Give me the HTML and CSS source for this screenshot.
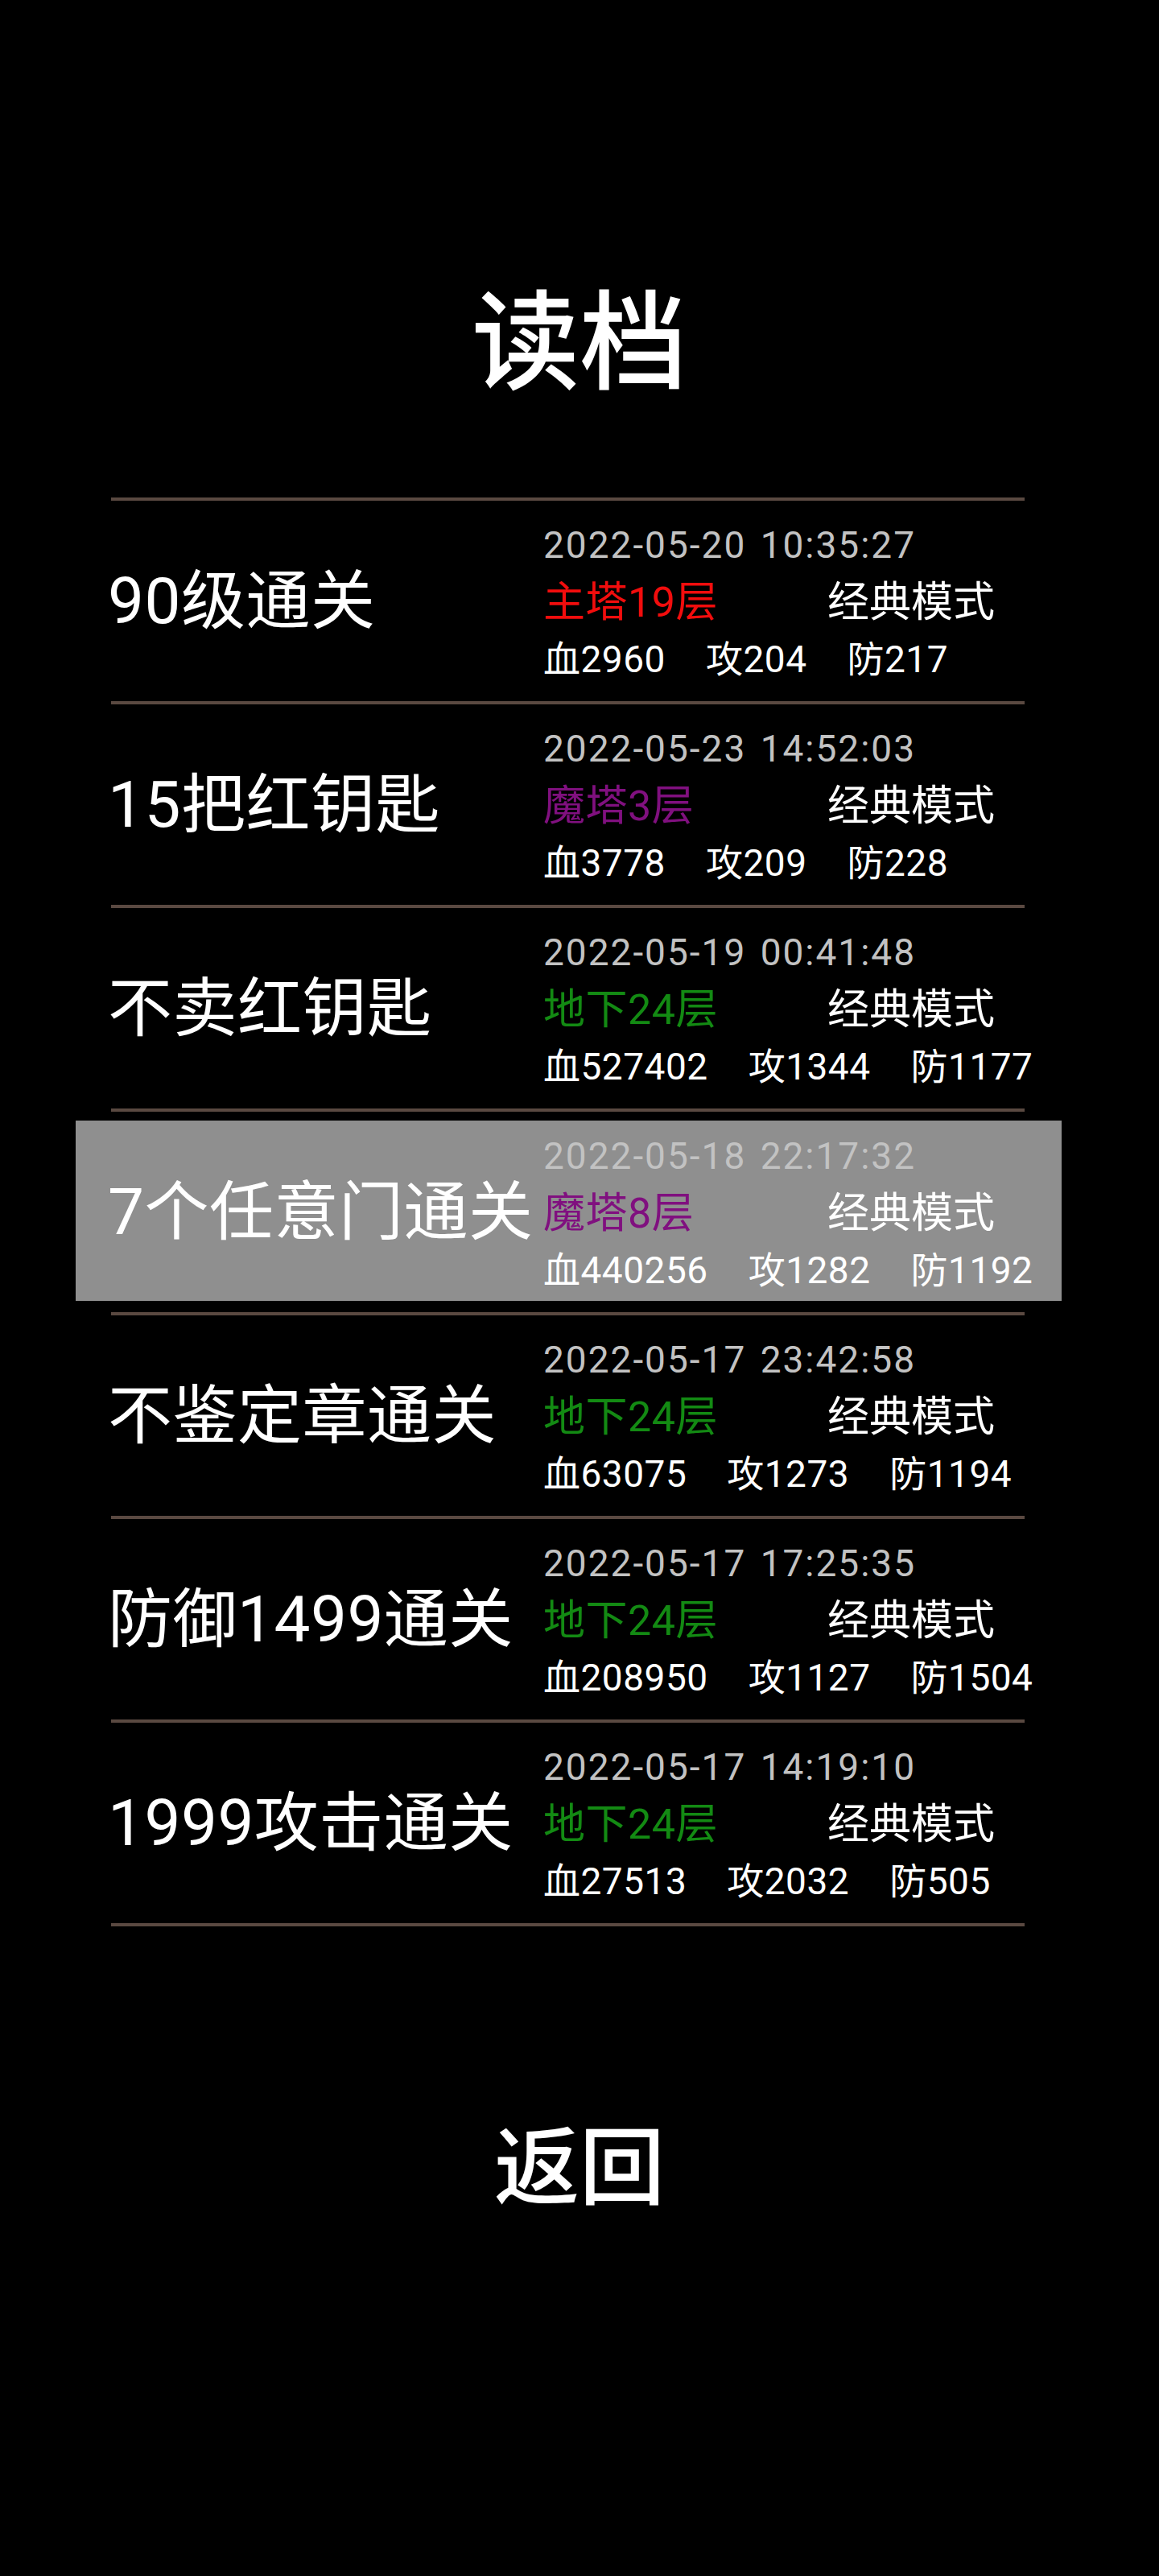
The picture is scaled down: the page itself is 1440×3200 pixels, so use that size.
FILE: index.html
```html
<!DOCTYPE html>
<html lang="zh-CN">
<head>
<meta charset="utf-8">
<title>读档</title>
<link rel="stylesheet" href="styles.css">
</head>
<body>
<main class="screen">
  <h1 class="heading">读档</h1>
  <ul class="saves">
    <li class="save">
      <div class="save-name">90级通关</div>
      <div class="save-info">
        <div class="save-time">2022-05-20 10:35:27</div>
        <div class="save-floor"><span class="floor floor-main">主塔19层</span><span class="mode">经典模式</span></div>
        <div class="save-stats"><span>血2960</span><span>攻204</span><span>防217</span></div>
      </div>
    </li>
    <li class="save">
      <div class="save-name">15把红钥匙</div>
      <div class="save-info">
        <div class="save-time">2022-05-23 14:52:03</div>
        <div class="save-floor"><span class="floor floor-magic">魔塔3层</span><span class="mode">经典模式</span></div>
        <div class="save-stats"><span>血3778</span><span>攻209</span><span>防228</span></div>
      </div>
    </li>
    <li class="save">
      <div class="save-name">不卖红钥匙</div>
      <div class="save-info">
        <div class="save-time">2022-05-19 00:41:48</div>
        <div class="save-floor"><span class="floor floor-under">地下24层</span><span class="mode">经典模式</span></div>
        <div class="save-stats"><span>血527402</span><span>攻1344</span><span>防1177</span></div>
      </div>
    </li>
    <li class="save is-selected">
      <div class="save-name">7个任意门通关</div>
      <div class="save-info">
        <div class="save-time">2022-05-18 22:17:32</div>
        <div class="save-floor"><span class="floor floor-magic">魔塔8层</span><span class="mode">经典模式</span></div>
        <div class="save-stats"><span>血440256</span><span>攻1282</span><span>防1192</span></div>
      </div>
    </li>
    <li class="save">
      <div class="save-name">不鉴定章通关</div>
      <div class="save-info">
        <div class="save-time">2022-05-17 23:42:58</div>
        <div class="save-floor"><span class="floor floor-under">地下24层</span><span class="mode">经典模式</span></div>
        <div class="save-stats"><span>血63075</span><span>攻1273</span><span>防1194</span></div>
      </div>
    </li>
    <li class="save">
      <div class="save-name">防御1499通关</div>
      <div class="save-info">
        <div class="save-time">2022-05-17 17:25:35</div>
        <div class="save-floor"><span class="floor floor-under">地下24层</span><span class="mode">经典模式</span></div>
        <div class="save-stats"><span>血208950</span><span>攻1127</span><span>防1504</span></div>
      </div>
    </li>
    <li class="save">
      <div class="save-name">1999攻击通关</div>
      <div class="save-info">
        <div class="save-time">2022-05-17 14:19:10</div>
        <div class="save-floor"><span class="floor floor-under">地下24层</span><span class="mode">经典模式</span></div>
        <div class="save-stats"><span>血27513</span><span>攻2032</span><span>防505</span></div>
      </div>
    </li>
  </ul>
  <div class="back">返回</div>
</main>
</body>
</html>
```

FILE: styles.css
```css
* {
  box-sizing: border-box;
}

html,
body {
  margin: 0;
  background: #000;
}

body {
  font-family: Roboto, "Noto Sans CJK SC", sans-serif;
  color: #fff;
}

.screen {
  padding-top: 335px;
  min-height: 3200px;
}

.heading {
  margin: 0;
  text-align: center;
  font-family: "Noto Sans CJK SC", sans-serif;
  font-weight: 500;
  font-size: 134px;
  line-height: 160px;
}

.saves {
  list-style: none;
  margin: 123px 0 0 138px;
  padding: 0;
  width: 1135px;
  border-bottom: 4px solid #5a4941;
}

.save {
  position: relative;
  z-index: 0;
  display: grid;
  grid-template-columns: 537px 1fr;
  height: 253px;
  border-top: 4px solid #5a4941;
}

.save.is-selected::before {
  content: "";
  position: absolute;
  top: 11px;
  bottom: 14px;
  left: -44px;
  right: -46px;
  background: #8f8f8f;
  z-index: -1;
}

.save-name {
  align-self: center;
  margin-left: -4px;
  font-size: 80px;
  line-height: 80px;
  letter-spacing: 0.5px;
  white-space: nowrap;
}

.save-info {
  padding-top: 20px;
}

.save-time,
.save-floor,
.save-stats {
  height: 71px;
  line-height: 71px;
  white-space: nowrap;
}

.save-time {
  font-size: 46px;
  color: #c2c2c2;
  letter-spacing: 2px;
  word-spacing: 4px;
}

.save-floor {
  display: flex;
  font-size: 52px;
}

.floor {
  width: 353px;
  letter-spacing: 0.5px;
}

.floor-main {
  color: #f20d0d;
}

.floor-magic {
  color: #80107f;
}

.floor-under {
  color: #138a13;
}

.mode {
  color: #fff;
}

.save-stats {
  display: flex;
  gap: 50px;
  font-size: 46px;
  letter-spacing: 0.5px;
}

.back {
  margin-top: 226px;
  text-align: center;
  font-family: "Noto Sans CJK SC", sans-serif;
  font-weight: 500;
  font-size: 106px;
  line-height: 130px;
}
```
